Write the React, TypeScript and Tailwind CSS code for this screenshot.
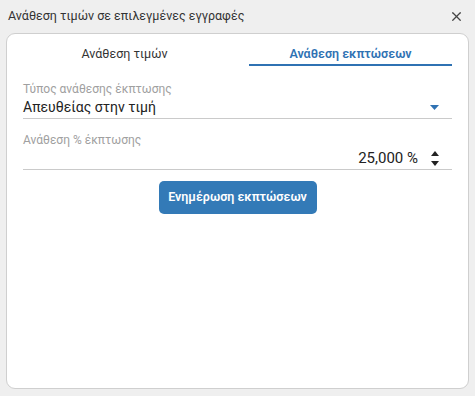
import { X } from "lucide-react";

export default function App() {
  return (
    <div className="w-[475px] h-[396px] bg-[#efefef] flex flex-col font-['Roboto',sans-serif] text-[#333]">
      {/* header */}
      <div className="h-[33px] flex items-center justify-between pl-[8px] pr-[11px]">
        <span className="text-[12.5px]">Ανάθεση τιμών σε επιλεγμένες εγγραφές</span>
        <X size={15} strokeWidth={2} className="text-[#444]" />
      </div>

      {/* card */}
      <div className="mx-[6px] mb-[7px] flex-1 bg-white border border-[#cfcfcf] rounded-[9px] px-[16px]">
        <div className="flex justify-between pt-[11px]">
          <div className="w-[203px] h-[21px] text-center text-[12.5px] text-[#333]">Ανάθεση τιμών</div>
          <div className="w-[203px] h-[21px] text-center text-[12.5px] font-semibold text-[#2f72b3] border-b-2 border-[#2f72b3]">
            Ανάθεση εκπτώσεων
          </div>
        </div>

        <div className="pt-[15px]">
          <div className="text-[12px] text-[#a0a0a0] leading-[16px]">Τύπος ανάθεσης έκπτωσης</div>
          <div className="flex items-center justify-between h-[22px] border-b border-[#cacaca] pr-[13px]">
            <span className="text-[14px] text-[#222]">Απευθείας στην τιμή</span>
            <svg width="9" height="5" viewBox="0 0 9 5">
              <path d="M0 0 H9 L4.5 5 Z" fill="#2f72b3" />
            </svg>
          </div>
        </div>

        <div className="pt-[13px]">
          <div className="text-[12px] text-[#a0a0a0] leading-[16px]">Ανάθεση % έκπτωσης</div>
          <div className="flex items-center justify-end h-[22px] border-b border-[#cacaca] pr-[13px] gap-[13px]">
            <span className="text-[15px] text-[#222]">25,000 %</span>
            <svg width="8" height="15" viewBox="0 0 8 15">
              <path d="M0 5 L4 0 L8 5 Z" fill="#222" />
              <path d="M0 10 L4 15 L8 10 Z" fill="#222" />
            </svg>
          </div>
        </div>

        <div className="flex justify-center pt-[11px]">
          <button className="w-[158px] h-[33px] rounded-[5px] bg-[#337ab7] text-white text-[12.5px] font-semibold">
            Ενημέρωση εκπτώσεων
          </button>
        </div>
      </div>
    </div>
  );
}
